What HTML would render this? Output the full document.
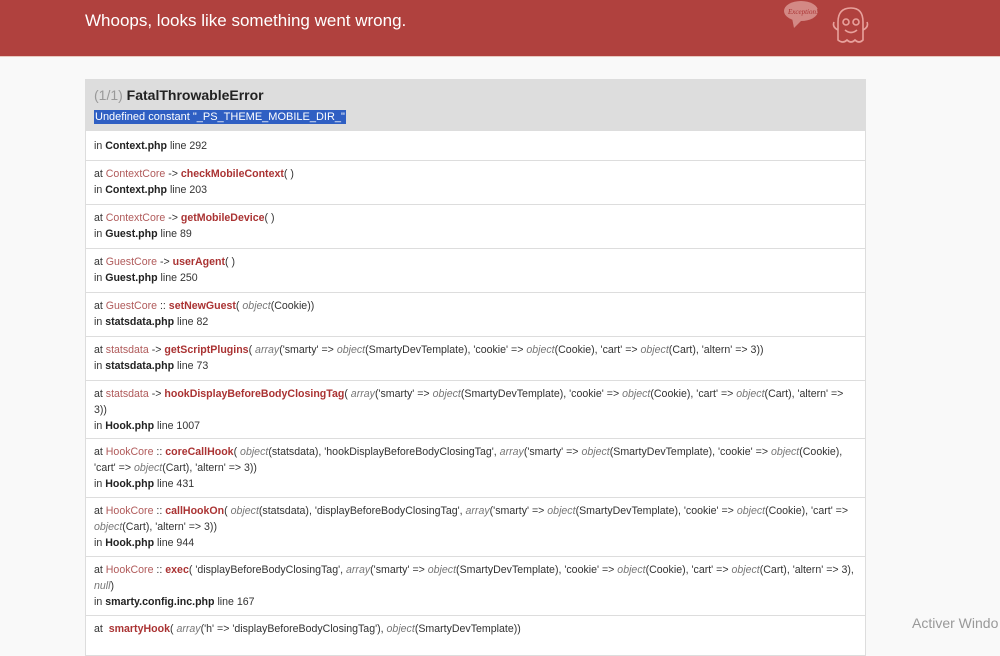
<!DOCTYPE html>
<html><head><meta charset="utf-8"><style>
body{margin:0;background:#f9f9f9;font-family:"Liberation Sans",Arial,sans-serif;width:1000px;height:634px;overflow:hidden;position:relative;color:#222}
.hd{position:absolute;left:0;top:0;width:1000px;height:56px;background:#b0413e;border-bottom:1px solid #e8c9c0}
.hd h1{position:absolute;left:85px;top:11px;margin:0;font-size:17px;font-weight:normal;color:#fff}
.panel{position:absolute;left:85px;top:79px;width:779px;border:1px solid #ddd;background:#fff}
.top{background:#ddd;height:50px;position:relative}
.top .t{position:absolute;left:8px;top:7px;font-size:14px;font-weight:bold;color:#222}
.top .t span{color:#999;font-weight:normal}
.top .m{position:absolute;left:8px;top:30px;font-size:11px;background:#2f5fc3;color:#fff;padding:1px 1px}
.row{border-top:1px solid #ddd;font-size:10.6px;line-height:16px;padding:5px 8px;box-sizing:border-box;color:#333;white-space:nowrap;overflow:hidden}
.c{color:#b05a5a}.f{color:#a33;font-weight:bold}i{color:#777}b{color:#222}
</style></head><body>
<div class="hd"><h1>Whoops, looks like something went wrong.</h1>
<svg style="position:absolute;left:780px;top:0" width="90" height="50" viewBox="0 0 90 50">
<ellipse cx="21" cy="11" rx="17" ry="10" fill="#d38985"/><path d="M12 18 L14 28 L22 20Z" fill="#d38985"/>
<text x="8" y="14" font-size="7" font-style="italic" fill="#a33" font-family="Liberation Serif,serif">Exception!</text>
<g fill="none" stroke="#e8a19c" stroke-width="1.6"><path d="M58 40 L58 22 Q58 8 71 8 Q83 8 83 22 L83 40 Q79 44 75 40 Q71 44 67 40 Q63 44 58 40Z"/><circle cx="66" cy="22" r="3"/><circle cx="76" cy="22" r="3"/><path d="M65 30 Q71 35 77 30"/><path d="M58 30 Q52 27 54 22"/><path d="M83 30 Q89 27 87 22"/></g></svg>
</div>
<div class="panel">
<div class="top"><div class="t"><span>(1/1)</span> FatalThrowableError</div><div class="m">Undefined constant "_PS_THEME_MOBILE_DIR_"</div></div>
<div class="row" style="height:30px;padding-top:7px">in <b>Context.php</b> line 292</div>
<div class="row" style="height:44px">at <span class="c">ContextCore</span> -&gt; <span class="f">checkMobileContext</span>( )<br>in <b>Context.php</b> line 203</div>
<div class="row" style="height:44px">at <span class="c">ContextCore</span> -&gt; <span class="f">getMobileDevice</span>( )<br>in <b>Guest.php</b> line 89</div>
<div class="row" style="height:44px">at <span class="c">GuestCore</span> -&gt; <span class="f">userAgent</span>( )<br>in <b>Guest.php</b> line 250</div>
<div class="row" style="height:44px">at <span class="c">GuestCore</span> :: <span class="f">setNewGuest</span>( <i>object</i>(Cookie))<br>in <b>statsdata.php</b> line 82</div>
<div class="row" style="height:44px">at <span class="c">statsdata</span> -&gt; <span class="f">getScriptPlugins</span>( <i>array</i>('smarty' =&gt; <i>object</i>(SmartyDevTemplate), 'cookie' =&gt; <i>object</i>(Cookie), 'cart' =&gt; <i>object</i>(Cart), 'altern' =&gt; 3))<br>in <b>statsdata.php</b> line 73</div>
<div class="row" style="height:58px">at <span class="c">statsdata</span> -&gt; <span class="f">hookDisplayBeforeBodyClosingTag</span>( <i>array</i>('smarty' =&gt; <i>object</i>(SmartyDevTemplate), 'cookie' =&gt; <i>object</i>(Cookie), 'cart' =&gt; <i>object</i>(Cart), 'altern' =&gt;<br>3))<br>in <b>Hook.php</b> line 1007</div>
<div class="row" style="height:59px">at <span class="c">HookCore</span> :: <span class="f">coreCallHook</span>( <i>object</i>(statsdata), 'hookDisplayBeforeBodyClosingTag', <i>array</i>('smarty' =&gt; <i>object</i>(SmartyDevTemplate), 'cookie' =&gt; <i>object</i>(Cookie),<br>'cart' =&gt; <i>object</i>(Cart), 'altern' =&gt; 3))<br>in <b>Hook.php</b> line 431</div>
<div class="row" style="height:59px">at <span class="c">HookCore</span> :: <span class="f">callHookOn</span>( <i>object</i>(statsdata), 'displayBeforeBodyClosingTag', <i>array</i>('smarty' =&gt; <i>object</i>(SmartyDevTemplate), 'cookie' =&gt; <i>object</i>(Cookie), 'cart' =&gt;<br><i>object</i>(Cart), 'altern' =&gt; 3))<br>in <b>Hook.php</b> line 944</div>
<div class="row" style="height:59px">at <span class="c">HookCore</span> :: <span class="f">exec</span>( 'displayBeforeBodyClosingTag', <i>array</i>('smarty' =&gt; <i>object</i>(SmartyDevTemplate), 'cookie' =&gt; <i>object</i>(Cookie), 'cart' =&gt; <i>object</i>(Cart), 'altern' =&gt; 3),<br><i>null</i>)<br>in <b>smarty.config.inc.php</b> line 167</div>
<div class="row" style="height:40px">at &nbsp;<span class="f">smartyHook</span>( <i>array</i>('h' =&gt; 'displayBeforeBodyClosingTag'), <i>object</i>(SmartyDevTemplate))</div>
</div>
<div style="position:absolute;left:912px;top:615px;font-size:14px;color:#999">Activer Windo</div>
</body></html>
